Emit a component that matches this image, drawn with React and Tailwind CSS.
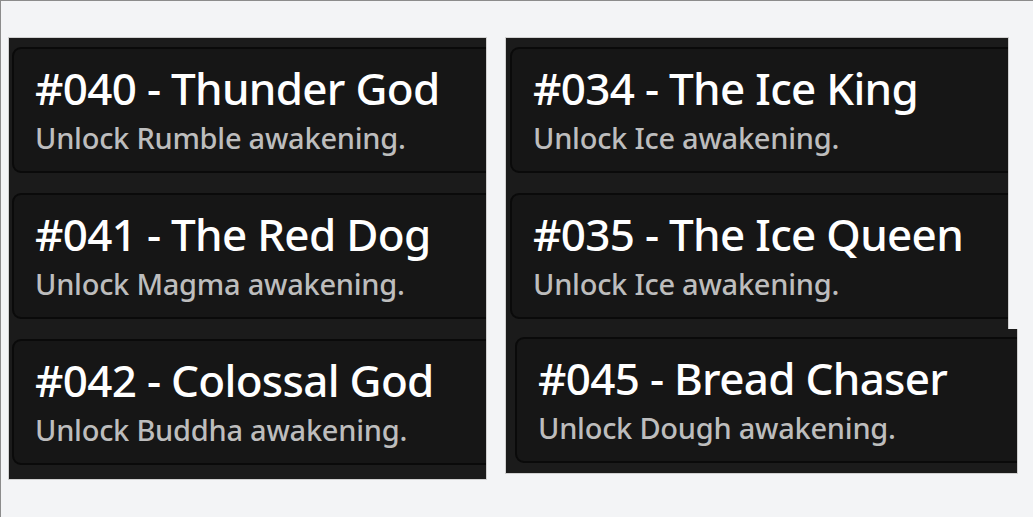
const leftCards = [
  { id: '040', name: 'Thunder God', fruit: 'Rumble' },
  { id: '041', name: 'The Red Dog', fruit: 'Magma' },
  { id: '042', name: 'Colossal God', fruit: 'Buddha' },
];

const rightCards = [
  { id: '034', name: 'The Ice King', fruit: 'Ice' },
  { id: '035', name: 'The Ice Queen', fruit: 'Ice' },
];

const Card = ({ id, name, fruit }) => (
  <div className="w-[540px] h-[126px] shrink-0 rounded-[9px] border-2 border-[#0a0a0a] bg-[#161616] pl-[21px] pt-[13px]">
    <p className="text-[44px] leading-[52px] font-medium text-white tracking-[-0.7px]">
      #{id} - {name}
    </p>
    <p className="mt-[7px] text-[29px] leading-[34px] font-medium text-[#bdbdbd] tracking-[-0.25px]">
      Unlock {fruit} awakening.
    </p>
  </div>
);

export default function App() {
  return (
    <div
      className="w-[1033px] h-[517px] bg-[#f3f4f6] border-t border-l border-[#8c8c8c] flex gap-[18px] pl-[7px] pt-[36px] overflow-hidden"
      style={{ fontFamily: '"Noto Sans", sans-serif' }}
    >
      <div className="w-[479px] h-[443px] bg-[#1b1b1b] border border-[#d0d0d0] overflow-hidden flex flex-col gap-[20px] pt-[9px] pl-[3px]">
        {leftCards.map((c) => (
          <Card key={c.id} {...c} />
        ))}
      </div>

      <div className="flex flex-col">
        <div className="w-[504px] h-[292px] bg-[#1b1b1b] border border-b-0 border-[#d0d0d0] overflow-hidden flex flex-col gap-[20px] pt-[9px] pl-[4px]">
          {rightCards.map((c) => (
            <Card key={c.id} {...c} />
          ))}
        </div>
        <div className="w-[513px] h-[145px] bg-[#1b1b1b] border border-t-0 border-[#d0d0d0] overflow-hidden pt-[8px] pl-[9px]">
          <Card id="045" name="Bread Chaser" fruit="Dough" />
        </div>
      </div>
    </div>
  );
}
